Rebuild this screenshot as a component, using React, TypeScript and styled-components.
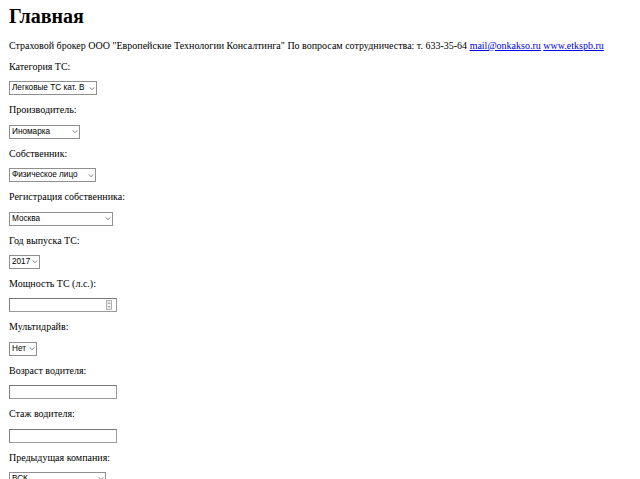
import React from "react";
import styled, { createGlobalStyle } from "styled-components";

const Global = createGlobalStyle`
  html, body { margin: 0; padding: 0; background: #fff; }
  body { font-family: "Liberation Serif", "Times New Roman", serif; color: #000; }
`;

const Page = styled.div`
  padding: 0 9px;
`;

const Title = styled.h1`
  font-size: 20px;
  line-height: 24px;
  font-weight: bold;
  margin: 4px 0 12px 0;
`;

const Para = styled.p<{ $gap?: number }>`
  font-size: 10px;
  line-height: 12px;
  margin: 0 0 ${(p) => p.$gap ?? 8.4}px 0;
`;

const Link = styled.a`
  color: #0000ee;
  text-decoration: underline;
`;

const ControlRow = styled.div`
  height: 14px;
  margin: 0 0 9px 0;
  display: flex;
  align-items: center;
`;

const SelectBox = styled.div<{ $w: number }>`
  position: relative;
  width: ${(p) => p.$w}px;
  height: 14px;
  box-sizing: border-box;
`;

const NativeSelect = styled.select`
  display: block;
  appearance: none;
  -webkit-appearance: none;
  width: 100%;
  height: 100%;
  box-sizing: border-box;
  border: 1px solid #8f8f8f;
  border-radius: 0;
  background: #fff;
  font-family: "Liberation Sans", Arial, sans-serif;
  font-size: 8.2px;
  color: #000;
  padding: 0 0 0 2px;
  margin: 0;
  line-height: 12px;
  outline: none;
`;

const Chevron = styled.svg`
  position: absolute;
  right: 2.5px;
  top: 5.5px;
  width: 6px;
  height: 3px;
  pointer-events: none;
`;

const InputBox = styled.div`
  position: relative;
  width: 108px;
  height: 14px;
`;

const TextInput = styled.input`
  display: block;
  width: 100%;
  height: 100%;
  box-sizing: border-box;
  border: 1px solid #9a9a9a;
  border-top-color: #767676;
  border-left-color: #7e7e7e;
  border-radius: 0;
  background: #fff;
  margin: 0;
  padding: 0 2px;
  font-size: 9px;
  outline: none;
  appearance: textfield;
  -moz-appearance: textfield;
  &::-webkit-inner-spin-button,
  &::-webkit-outer-spin-button {
    -webkit-appearance: none;
    margin: 0;
  }
`;

const Spinner = styled.svg`
  position: absolute;
  right: 5px;
  top: 2px;
  width: 6px;
  height: 10px;
  pointer-events: none;
`;

function Select({ w, value }: { w: number; value: string }) {
  return (
    <SelectBox $w={w}>
      <NativeSelect defaultValue={value}>
        <option>{value}</option>
      </NativeSelect>
      <Chevron viewBox="0 0 6 3">
        <path d="M0.5 0.3 L3 2.7 L5.5 0.3" fill="none" stroke="#666" strokeWidth="0.8" />
      </Chevron>
    </SelectBox>
  );
}

function NumberField() {
  return (
    <InputBox>
      <TextInput type="number" />
      <Spinner viewBox="0 0 6 10">
        <rect x="0.5" y="0.5" width="5" height="9" fill="#f0f0f0" stroke="#a0a0a0" strokeWidth="0.8" />
        <path d="M1.8 4 L3 2.6 L4.2 4 M1.8 6 L3 7.4 L4.2 6" fill="none" stroke="#666" strokeWidth="0.6" />
      </Spinner>
    </InputBox>
  );
}

function TextField() {
  return (
    <InputBox>
      <TextInput type="text" />
    </InputBox>
  );
}

export default function App() {
  return (
    <>
      <Global />
      <Page>
        <Title>Главная</Title>
        <Para $gap={9}>
          Страховой брокер ООО "Европейские Технологии Консалтинга" По вопросам сотрудничества: т. 633-35-64{" "}
          <Link href="#">mail@onkakso.ru</Link> <Link href="#">www.etkspb.ru</Link>
        </Para>
        <Para>Категория ТС:</Para>
        <ControlRow><Select w={88} value="Легковые ТС кат. B" /></ControlRow>
        <Para>Производитель:</Para>
        <ControlRow><Select w={71} value="Иномарка" /></ControlRow>
        <Para>Собственник:</Para>
        <ControlRow><Select w={87} value="Физическое лицо" /></ControlRow>
        <Para>Регистрация собственника:</Para>
        <ControlRow><Select w={104} value="Москва" /></ControlRow>
        <Para>Год выпуска ТС:</Para>
        <ControlRow><Select w={31} value="2017" /></ControlRow>
        <Para>Мощность ТС (л.с.):</Para>
        <ControlRow><NumberField /></ControlRow>
        <Para>Мультидрайв:</Para>
        <ControlRow><Select w={28} value="Нет" /></ControlRow>
        <Para>Возраст водителя:</Para>
        <ControlRow><TextField /></ControlRow>
        <Para>Стаж водителя:</Para>
        <ControlRow><TextField /></ControlRow>
        <Para>Предыдущая компания:</Para>
        <ControlRow><Select w={97} value="ВСК" /></ControlRow>
      </Page>
    </>
  );
}
